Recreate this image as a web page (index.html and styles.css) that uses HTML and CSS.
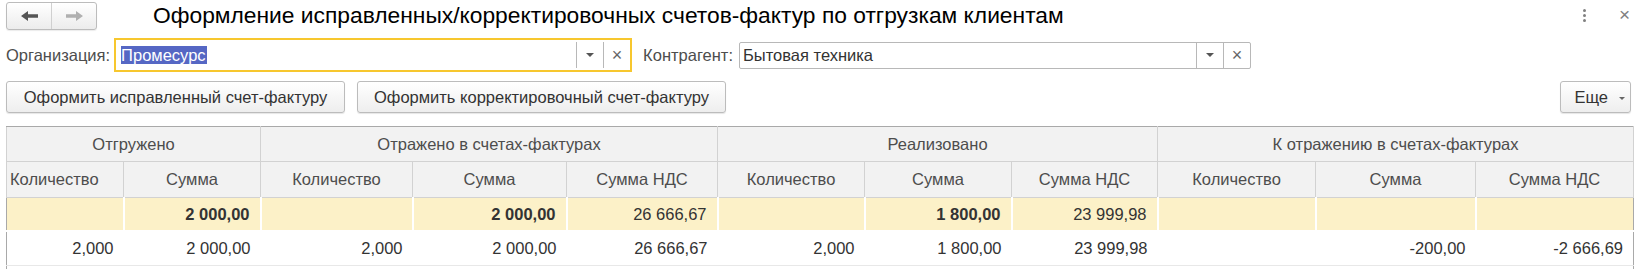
FILE: index.html
```html
<!DOCTYPE html>
<html lang="ru">
<head>
    <meta charset="UTF-8">
    <title>Оформление исправленных/корректировочных счетов-фактур</title>
    <link rel="stylesheet" href="styles.css">
</head>
<body>
    <div class="page">
        <header class="top">
            <div class="nav">
                <button class="nav-btn back">
                    <svg width="17" height="10" viewBox="0 0 17 10"><polygon points="0,5 7,0 7,3.3 17,3.3 17,6.7 7,6.7 7,10"/></svg>
                </button>
                <button class="nav-btn fwd">
                    <svg width="17" height="10" viewBox="0 0 17 10"><polygon points="17,5 10,0 10,3.3 0,3.3 0,6.7 10,6.7 10,10"/></svg>
                </button>
            </div>
            <h1>Оформление исправленных/корректировочных счетов-фактур по отгрузкам клиентам</h1>
            <div class="win-tools">
                <span class="kebab"><i></i><i></i><i></i></span>
                <span class="win-close">×</span>
            </div>
        </header>

        <div class="filters">
            <label class="field-label">Организация:</label>
            <div class="field org focused">
                <div class="field-value"><span class="sel">Промесурс</span></div>
                <div class="field-btn drop"><span class="tri"></span></div>
                <div class="field-btn clear">×</div>
            </div>
            <label class="field-label second">Контрагент:</label>
            <div class="field partner">
                <div class="field-value">Бытовая техника</div>
                <div class="field-btn drop"><span class="tri"></span></div>
                <div class="field-btn clear">×</div>
            </div>
        </div>

        <div class="toolbar">
            <button class="btn btn-fix">Оформить исправленный счет-фактуру</button>
            <button class="btn btn-corr">Оформить корректировочный счет-фактуру</button>
            <button class="btn btn-more">Еще <span class="tri small"></span></button>
        </div>

        <table class="grid">
            <colgroup>
                <col style="width:117px"><col style="width:137px">
                <col style="width:152px"><col style="width:154px"><col style="width:151px">
                <col style="width:147px"><col style="width:147px"><col style="width:146px">
                <col style="width:158px"><col style="width:160px"><col style="width:158px">
            </colgroup>
            <thead>
                <tr class="group-row">
                    <th colspan="2">Отгружено</th>
                    <th colspan="3">Отражено в счетах-фактурах</th>
                    <th colspan="3">Реализовано</th>
                    <th colspan="3">К отражению в счетах-фактурах</th>
                </tr>
                <tr class="col-row">
                    <th class="first">Количество</th>
                    <th>Сумма</th>
                    <th>Количество</th>
                    <th>Сумма</th>
                    <th>Сумма НДС</th>
                    <th>Количество</th>
                    <th>Сумма</th>
                    <th>Сумма НДС</th>
                    <th>Количество</th>
                    <th>Сумма</th>
                    <th>Сумма НДС</th>
                </tr>
            </thead>
            <tbody>
                <tr class="total">
                    <td></td>
                    <td class="b">2 000,00</td>
                    <td></td>
                    <td class="b">2 000,00</td>
                    <td>26 666,67</td>
                    <td></td>
                    <td class="b">1 800,00</td>
                    <td>23 999,98</td>
                    <td></td>
                    <td></td>
                    <td></td>
                </tr>
                <tr class="line">
                    <td>2,000</td>
                    <td>2 000,00</td>
                    <td>2,000</td>
                    <td>2 000,00</td>
                    <td>26 666,67</td>
                    <td>2,000</td>
                    <td>1 800,00</td>
                    <td>23 999,98</td>
                    <td></td>
                    <td>-200,00</td>
                    <td>-2 666,69</td>
                </tr>
                <tr class="line empty">
                    <td colspan="11"></td>
                </tr>
            </tbody>
        </table>
    </div>
</body>
</html>
```

FILE: styles.css
```css
body {
    margin: 0;
    background-color: #fff;
    font-family: "Liberation Sans", Arial, sans-serif;
    font-size: 16.5px;
    color: #333;
}
.page {
    padding: 0 0 0 6px;
}
.top {
    display: flex;
    align-items: center;
    height: 30px;
}
.nav {
    display: flex;
    height: 28px;
    margin-top: 1px;
    border: 1px solid #bcbcbc;
    border-radius: 3px;
    background: linear-gradient(#ffffff, #ececec);
    box-shadow: 0 1px 1px rgba(0, 0, 0, 0.08);
    box-sizing: border-box;
    width: 91px;
}
.nav-btn {
    flex: 1;
    border: none;
    background: transparent;
    padding: 0;
    display: flex;
    align-items: center;
    justify-content: center;
}
.nav-btn.back {
    border-right: 1px solid #d0d0d0;
    fill: #555;
}
.nav-btn.fwd {
    fill: #b0b0b0;
}
.top h1 {
    margin: 0 0 0 56px;
    font-size: 22.8px;
    font-weight: normal;
    color: #000;
    white-space: nowrap;
}
.win-tools {
    margin-left: auto;
    display: flex;
    align-items: center;
    height: 28px;
    margin-right: 4px;
}
.kebab {
    display: flex;
    flex-direction: column;
    gap: 2px;
    margin-right: 33px;
}
.kebab i {
    width: 3px;
    height: 3px;
    border-radius: 50%;
    background: #808080;
}
.win-close {
    color: #808080;
    font-size: 19px;
}

.filters {
    display: flex;
    align-items: center;
    margin-top: 8px;
    height: 34px;
}
.field-label {
    color: #4d4d4d;
    margin-right: 4px;
}
.field-label.second {
    margin-left: 11px;
    margin-right: 6px;
}
.field {
    display: flex;
    box-sizing: border-box;
    border: 1px solid #b8b8b8;
    border-radius: 2px;
    height: 27px;
    background: #fff;
}
.field.org {
    width: 518px;
    height: 34px;
    border: 2px solid #f7c72e;
    border-radius: 0;
    padding: 2px 0;
}
.field.partner {
    width: 512px;
}
.field-value {
    flex: 1;
    display: flex;
    align-items: center;
    padding-left: 3px;
    color: #333;
}
.field.org .field-value {
    padding-left: 5px;
}
.sel {
    background: #5567c4;
    color: #fff;
    line-height: 18px;
    padding-right: 1px;
}
.field-btn {
    display: flex;
    align-items: center;
    justify-content: center;
    border-left: 1px solid #b8b8b8;
    color: #666;
}
.field-btn.drop {
    width: 26px;
}
.field-btn.clear {
    width: 26px;
    font-size: 18px;
}
.tri {
    width: 0;
    height: 0;
    border-left: 4px solid transparent;
    border-right: 4px solid transparent;
    border-top: 4px solid #555;
}
.tri.small {
    display: inline-block;
    border-left-width: 3px;
    border-right-width: 3px;
    border-top: 3px solid #666;
    vertical-align: middle;
    margin-left: 6px;
}

.toolbar {
    display: flex;
    margin-top: 9px;
    height: 32px;
    padding-right: 3px;
}
.btn {
    box-sizing: border-box;
    height: 32px;
    border: 1px solid #bcbcbc;
    border-radius: 3px;
    background: linear-gradient(#ffffff, #eeeeee);
    box-shadow: 0 1px 1px rgba(0, 0, 0, 0.1);
    font-family: inherit;
    font-size: 16.5px;
    color: #333;
    padding: 0 10px;
}
.btn-fix {
    width: 339px;
}
.btn-corr {
    width: 369px;
    margin-left: 12px;
}
.btn-more {
    margin-left: auto;
    width: 71px;
    padding: 0 0 0 8px;
}

.grid {
    margin-top: 13px;
    border-collapse: collapse;
    table-layout: fixed;
    width: 1628px;
    border: 1px solid #a9a9a9;
}
.grid th {
    background: #f2f2f2;
    color: #4d4d4d;
    font-weight: normal;
    border: 1px solid #d2d2d2;
    padding: 0 4px;
    white-space: nowrap;
    overflow: hidden;
}
.group-row th {
    height: 34px;
    border-top-color: #a9a9a9;
}
.col-row th {
    height: 35px;
}
.col-row th.first {
    text-align: left;
    padding-left: 3px;
}
.grid td {
    text-align: right;
    padding: 0 10px 0 4px;
    color: #333;
    white-space: nowrap;
}
.total td {
    height: 32px;
    background: #fcf1c8;
    border-left: 2px solid #fff;
    border-bottom: 2px solid #fff;
}
.total td:first-child {
    border-left: none;
}
.total td.b {
    font-weight: bold;
}
.line td {
    height: 33px;
    border-bottom: 1px solid #e8e8e8;
}
.line.empty td {
    height: 10px;
}
```
